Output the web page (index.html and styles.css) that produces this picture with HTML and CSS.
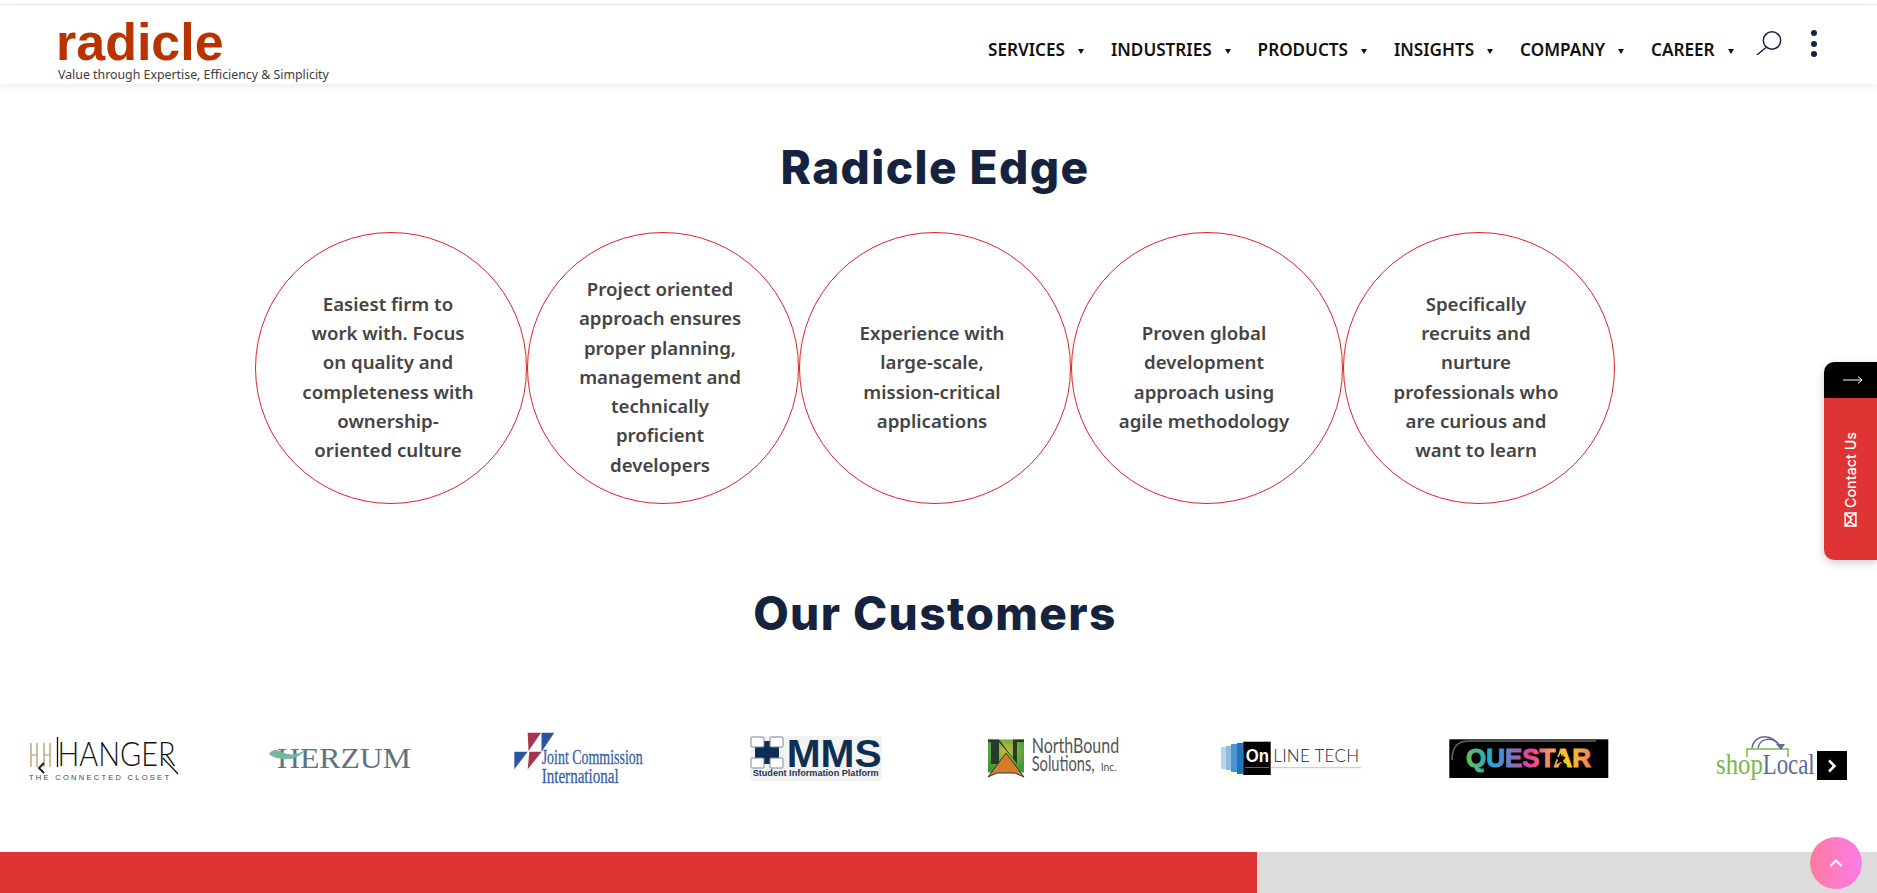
FILE: index.html
```html
<!DOCTYPE html>
<html lang="en">
<head>
<meta charset="utf-8">
<title>Radicle</title>
<link rel="stylesheet" href="styles.css">
</head>
<body>
<header class="site-header">
  <a class="brand">
    <span class="brand-name">radicle</span>
    <span class="brand-tag">Value through Expertise, Efficiency &amp; Simplicity</span>
  </a>
  <nav class="nav">
    <a class="nav-item">SERVICES</a>
    <a class="nav-item">INDUSTRIES</a>
    <a class="nav-item">PRODUCTS</a>
    <a class="nav-item">INSIGHTS</a>
    <a class="nav-item">COMPANY</a>
    <a class="nav-item">CAREER</a>
  </nav>
  <svg class="search-icon" width="26" height="24" viewBox="0 0 26 24"><circle cx="16" cy="9.5" r="8.7"/><path d="M10 16.5 L0.8 24"/></svg>
  <div class="kebab"><i></i><i></i><i></i></div>
</header>

<main class="content">
  <h2 class="section-title">Radicle Edge</h2>
  <div class="circles">
    <div class="circle"><p>Easiest firm to<br>work with. Focus<br>on quality and<br>completeness with<br>ownership-<br>oriented culture</p></div>
    <div class="circle"><p>Project oriented<br>approach ensures<br>proper planning,<br>management and<br>technically<br>proficient<br>developers</p></div>
    <div class="circle"><p>Experience with<br>large-scale,<br>mission-critical<br>applications</p></div>
    <div class="circle"><p>Proven global<br>development<br>approach using<br>agile methodology</p></div>
    <div class="circle"><p>Specifically<br>recruits and<br>nurture<br>professionals who<br>are curious and<br>want to learn</p></div>
  </div>
  <h2 class="section-title customers-title">Our Customers</h2>
</main>

<section class="carousel">
  <div class="logo-cell">
    <svg class="logo" viewBox="0 0 200 60" width="200" height="60">
      <path class="hanger-gold" d="M28 13V37M34 13V37M41 13V37M47 13V37M28 25H34M41 25H47"/>
      <path class="hanger-line" d="M54.5 7V37M160 28L175 44"/>
      <text class="hanger-main" x="54.5" y="36" textLength="118" lengthAdjust="spacingAndGlyphs">HANGER</text>
      <text class="hanger-sub" x="26" y="50" textLength="140">THE CONNECTED CLOSET</text>
    </svg>
  </div>
  <div class="logo-cell">
    <svg class="logo" viewBox="0 0 200 60" width="200" height="60">
      <text class="herzum-text" x="37" y="38" textLength="134" lengthAdjust="spacingAndGlyphs">HERZUM</text>
      <path class="herzum-swoosh" d="M29 24C33 18 38 20 44 23C52 26 60 24 66 19C60 28 50 30 42 29C36 28 32 27 29 24Z"/>
    </svg>
  </div>
  <div class="logo-cell">
    <svg class="logo" viewBox="0 0 200 60" width="200" height="60">
      <polygon class="jc-red" points="49.7,2.7 63,2.7 50.5,21"/>
      <polygon class="jc-blue" points="63.5,2.7 76.3,2.7 63.5,21.7"/>
      <polygon class="jc-blue" points="36.3,21.7 49.7,21.7 36.3,39.3"/>
      <polygon class="jc-red" points="51.3,21.7 63.7,21.7 49.7,39.3"/>
      <text class="jc-text" x="63.7" y="34" textLength="101" lengthAdjust="spacingAndGlyphs">Joint Commission</text>
      <text class="jc-text" x="63.7" y="52.7" textLength="77" lengthAdjust="spacingAndGlyphs">International</text>
    </svg>
  </div>
  <div class="logo-cell">
    <svg class="logo" viewBox="0 0 200 60" width="200" height="60">
      <rect class="mms-bg" x="34" y="6" width="132" height="45"/>
      <path class="mms-dark" d="M39 11H63V34H39Z"/>
      <rect class="mms-box" x="35" y="7" width="13" height="10" rx="1"/>
      <rect class="mms-box" x="54" y="7" width="13" height="10" rx="1"/>
      <rect class="mms-box" x="35" y="28" width="13" height="10" rx="1"/>
      <rect class="mms-box" x="54" y="28" width="13" height="10" rx="1"/>
      <text class="mms-main" x="70.7" y="37" textLength="95" lengthAdjust="spacingAndGlyphs">MMS</text>
      <text class="mms-sub" x="36.7" y="46" textLength="126" lengthAdjust="spacingAndGlyphs">Student Information Platform</text>
    </svg>
  </div>
  <div class="logo-cell">
    <svg class="logo" viewBox="0 0 200 60" width="200" height="60">
      <defs>
        <radialGradient id="nbGreen" cx="50%" cy="35%" r="60%"><stop offset="0" stop-color="#c5c23c"/><stop offset="1" stop-color="#3f9a3f"/></radialGradient>
        <linearGradient id="qsRainbow" gradientUnits="userSpaceOnUse" x1="38" y1="0" x2="163" y2="0">
          <stop offset="0" stop-color="#6cc04a"/><stop offset=".2" stop-color="#1fa8d8"/><stop offset=".38" stop-color="#8a6fc0"/><stop offset=".52" stop-color="#ec3f8c"/><stop offset=".7" stop-color="#f7a35c"/><stop offset=".82" stop-color="#f5d020"/><stop offset="1" stop-color="#f27a6a"/>
        </linearGradient>
      </defs>
      <rect class="nb-box" x="35" y="9.5" width="36" height="33"/>
      <path class="nb-n" d="M35 9.500H46L60 28V9.500H71V12H64V34L61 30L46 12V34H38V12H35Z"/>
      <polygon class="nb-tri" points="35,47 53,23 71,47 62,43 44,43"/>
      <text class="nb-text" x="78.7" y="23" textLength="87.5" lengthAdjust="spacingAndGlyphs">NorthBound</text>
      <text class="nb-text" x="78.7" y="41" textLength="63" lengthAdjust="spacingAndGlyphs">Solutions,</text>
      <text class="nb-small" x="147.7" y="41" textLength="16" lengthAdjust="spacingAndGlyphs">Inc.</text>
    </svg>
  </div>
  <div class="logo-cell">
    <svg class="logo" viewBox="0 0 200 60" width="200" height="60">
      <path class="ol-s1" d="M30 17H35V39H30Z"/>
      <path class="ol-s2" d="M35 16H40V40H35Z"/>
      <path class="ol-s3" d="M40 14H46V42H40Z"/>
      <path class="ol-s4" d="M46 13H52.300V44H46Z"/>
      <rect class="ol-box" x="52.300" y="11.700" width="27.400" height="33.300"/>
      <text class="ol-on" x="54.700" y="32.300" textLength="23.300" lengthAdjust="spacingAndGlyphs">On</text>
      <path class="ol-grey" d="M54 37.500H78"/>
      <text class="ol-text" x="82.300" y="32.300" textLength="85.700">LINE TECH</text>
      <path class="ol-rule" d="M79.700 37.700H170"/>
    </svg>
  </div>
  <div class="logo-cell">
    <svg class="logo" viewBox="0 0 200 60" width="200" height="60">
      <rect class="qs-box" x="21.300" y="9.300" width="159" height="38.700"/>
      <path class="qs-arc" d="M24 30C24 16 30 11 42 11H168"/>
      <text class="qs-text" x="38" y="37.300" textLength="125" lengthAdjust="spacingAndGlyphs">QUESTAR</text>
      <polygon class="qs-star" points="132.500,23 134,27 138,27 135,30 136.500,34.500 132.500,32 128.500,34.500 130,30 127,27 131,27"/>
    </svg>
  </div>
  <div class="logo-cell">
    <svg class="logo" viewBox="0 0 200 60" width="200" height="60">
      <path class="sl-green-line" d="M81 27V19H122V27"/>
      <path class="sl-arc" d="M86 18C88 3 108 3 115 18M92 18C94 8 106 6 113 15"/>
      <polygon class="sl-arrow" points="110,14 119,14 115,20"/>
      <text class="sl-shop" x="50" y="44" textLength="47" lengthAdjust="spacingAndGlyphs">shop</text>
      <text class="sl-local" x="96.700" y="44" textLength="52" lengthAdjust="spacingAndGlyphs">Local</text>
    </svg>
  </div>
  <svg class="prev-arrow" width="8" height="12" viewBox="0 0 8 12"><path d="M7 1L2 6L7 11"/></svg>
  <button class="next-arrow"><svg width="10" height="14" viewBox="0 0 10 14"><path d="M2 1.500L7.500 7L2 12.500"/></svg></button>
</section>

<footer class="footer-strip">
  <div class="footer-red"></div>
  <div class="footer-grey"></div>
</footer>

<aside class="contact-tab">
  <div class="contact-head"><svg width="20" height="10" viewBox="0 0 20 10"><path d="M0 5H19M15 1.500L19 5L15 8.500"/></svg></div>
  <div class="contact-body">
    <span class="contact-label">Contact Us</span>
    <svg class="contact-mail" width="15" height="13" viewBox="0 0 14 12"><rect x="1" y="1" width="12" height="10"/><path d="M1 1L7 7L13 1M1 11L5 5M13 11L9 5"/></svg>
  </div>
</aside>

<button class="to-top"><svg width="14" height="8" viewBox="0 0 14 8"><path d="M1.500 7L7 1.500L12.500 7"/></svg></button>
</body>
</html>
```

FILE: styles.css
```css
* { box-sizing: border-box; }
html, body { margin: 0; padding: 0; }
body {
  width: 1877px;
  height: 893px;
  overflow: hidden;
  background: #fff;
  font-family: "Noto Sans", sans-serif;
  position: relative;
}

/* header */
.site-header {
  height: 80px;
  border-top: 1px solid #e4e4e4;
  margin-top: 4px;
  padding: 0 0 0 56px;
  display: flex;
  align-items: flex-start;
  background: #fff;
  box-shadow: 0 2px 8px rgba(0, 0, 0, .08);
  position: relative;
}
.brand { display: flex; flex-direction: column; width: 932px; padding-top: 17px; }
.brand-name {
  font-family: "Liberation Sans", sans-serif;
  font-weight: 700;
  font-size: 52px;
  line-height: 40px;
  color: #b93300;
}
.brand-tag {
  font-size: 12.350px;
  line-height: 16px;
  margin: 5px 0 0 2px;
  color: #3d3d3d;
  white-space: nowrap;
}
.nav { display: flex; padding-top: 34px; }
.nav-item {
  font-size: 17.120px;
  font-weight: 600;
  line-height: 22px;
  color: #111;
  display: flex;
  align-items: center;
  white-space: nowrap;
  margin-right: 27px;
}
.nav-item::after {
  content: "";
  margin-left: 13px;
  border-left: 3.500px solid transparent;
  border-right: 3.500px solid transparent;
  border-top: 5px solid #111;
  margin-top: 2px;
}
.nav-item:last-child { margin-right: 0; }
.search-icon { margin: 26px 0 0 22px; fill: none; stroke: #16233f; stroke-width: 1.500; }
.kebab { display: flex; flex-direction: column; gap: 4.500px; margin: 25px 0 0 29px; }
.kebab i { width: 6px; height: 6px; border-radius: 50%; background: #16233f; display: block; }

/* main */
.content { width: 1870px; display: flex; flex-direction: column; align-items: center; padding-top: 53px; }
.section-title {
  margin: 0;
  font-family: "Inter", sans-serif;
  font-weight: 800;
  font-size: 46px;
  line-height: 60px;
  letter-spacing: 1.400px;
  color: #16233f;
}
.customers-title { margin-top: 79px; }
.circles { display: flex; margin-top: 35px; }
.circle {
  width: 272px;
  height: 272px;
  border: 1px solid #e0222a;
  border-radius: 50%;
  display: flex;
  align-items: center;
  justify-content: center;
  padding: 17px 6px 0 0;
}
.circle p {
  margin: 0;
  text-align: center;
  font-size: 18.650px;
  font-weight: 600;
  line-height: 29.300px;
  color: #444;
}

/* carousel */
.carousel {
  display: grid;
  grid-template-columns: repeat(8, 237.600px);
  width: 1904px;
  margin: 87px 0 0 -16px;
  position: relative;
}
.logo-cell { display: flex; justify-content: center; height: 60px; }
.logo { display: block; flex: none; }
.prev-arrow { position: absolute; left: 53px; top: 32px; fill: none; stroke: #222; stroke-width: 2; }
.next-arrow {
  position: absolute;
  left: 1833px;
  top: 21px;
  width: 30px;
  height: 29px;
  padding: 0;
  border: 0;
  background: #000;
  display: flex;
  align-items: center;
  justify-content: center;
}
.next-arrow svg { fill: none; stroke: #fff; stroke-width: 2.500; }

.hanger-gold { fill: none; stroke: #b0935f; stroke-width: 1.200; }
.hanger-line { fill: none; stroke: #111; stroke-width: 1.300; }
.hanger-main { font-family: "Lato", sans-serif; font-weight: 300; font-size: 33px; fill: #111; }
.hanger-sub { font-family: "Liberation Sans", sans-serif; font-size: 7.500px; fill: #444; }
.herzum-text { font-family: "Liberation Serif", serif; font-size: 30px; fill: #5d7382; }
.herzum-swoosh { fill: #74b8a2; }
.jc-red { fill: #a8344f; }
.jc-blue { fill: #2a55a5; }
.jc-text { font-family: "Liberation Serif", serif; font-size: 20px; fill: #3a5fa8; stroke: #3a5fa8; stroke-width: .3; }
.mms-bg { fill: #f3f3f3; }
.mms-dark { fill: #0e2f52; }
.mms-box { fill: #fff; stroke: #7d8c9c; stroke-width: 1; }
.mms-main { font-family: "Liberation Sans", sans-serif; font-weight: 700; font-size: 39px; fill: #0e2f52; }
.mms-sub { font-family: "Liberation Sans", sans-serif; font-weight: 700; font-size: 8.500px; fill: #1d3557; }
.nb-box { fill: url(#nbGreen); }
.nb-n { fill: #2a3a2a; }
.nb-tri { fill: #d67d2c; stroke: #2a3a2a; stroke-width: 1; }
.nb-text { font-family: "Lato", sans-serif; font-size: 22px; fill: #555; }
.nb-small { font-family: "Lato", sans-serif; font-size: 12px; fill: #555; }
.ol-s1 { fill: #b9d3ea; }
.ol-s2 { fill: #8fb9de; }
.ol-s3 { fill: #4f92cc; }
.ol-s4 { fill: #1f76bd; }
.ol-box { fill: #000; }
.ol-on { font-family: "Liberation Sans", sans-serif; font-weight: 700; font-size: 19px; fill: #fff; }
.ol-grey { stroke: #666; stroke-width: 1; }
.ol-text { font-family: "Lato", sans-serif; font-weight: 300; font-size: 17px; fill: #222; }
.ol-rule { stroke: #a9cbe9; stroke-width: 1; }
.qs-box { fill: #000; }
.qs-arc { fill: none; stroke: #666; stroke-width: 1.500; }
.qs-text { font-family: "Liberation Sans", sans-serif; font-weight: 700; font-size: 25px; fill: url(#qsRainbow); stroke: url(#qsRainbow); stroke-width: 1; }
.qs-star { fill: #000; }
.sl-green-line { fill: none; stroke: #7ab648; stroke-width: 1.500; }
.sl-arc { fill: none; stroke: #5b6a9c; stroke-width: 1.500; }
.sl-arrow { fill: #5b6a9c; }
.sl-shop { font-family: "Liberation Serif", serif; font-size: 30px; fill: #7ab648; }
.sl-local { font-family: "Liberation Serif", serif; font-size: 30px; fill: #5b6a9c; }

/* footer */
.footer-strip { display: flex; height: 41px; margin-top: 62px; }
.footer-red { width: 1257px; background: #e03434; }
.footer-grey { flex: 1; background: #dcdcdc; }

/* contact tab */
.contact-tab {
  position: absolute;
  right: 0;
  top: 362px;
  width: 53px;
  height: 198px;
  border-radius: 10px 0 0 10px;
  overflow: hidden;
  display: flex;
  flex-direction: column;
  box-shadow: 0 3px 10px rgba(0, 0, 0, .2);
}
.contact-head { height: 36px; background: #000; display: flex; align-items: center; justify-content: center; padding-left: 4px; }
.contact-head svg { fill: none; stroke: #fff; stroke-width: 1; }
.contact-body {
  flex: 1;
  background: #e03434;
  display: flex;
  flex-direction: column;
  align-items: center;
  padding-top: 34px;
  gap: 5px;
}
.contact-label {
  writing-mode: vertical-rl;
  transform: rotate(180deg);
  font-family: "Inter", sans-serif;
  font-weight: 500;
  font-size: 14.300px;
  line-height: 16px;
  color: #fff;
  white-space: nowrap;
}
.contact-mail { transform: rotate(-90deg); fill: none; stroke: #fff; stroke-width: 1.500; }

/* back to top */
.to-top {
  position: absolute;
  left: 1810px;
  top: 837px;
  width: 52px;
  height: 52px;
  padding: 0;
  border: 0;
  border-radius: 50%;
  background: linear-gradient(90deg, #ff7a9e, #fa7ce9);
  display: flex;
  align-items: center;
  justify-content: center;
}
.to-top svg { fill: none; stroke: #fff; stroke-width: 2; }
```
